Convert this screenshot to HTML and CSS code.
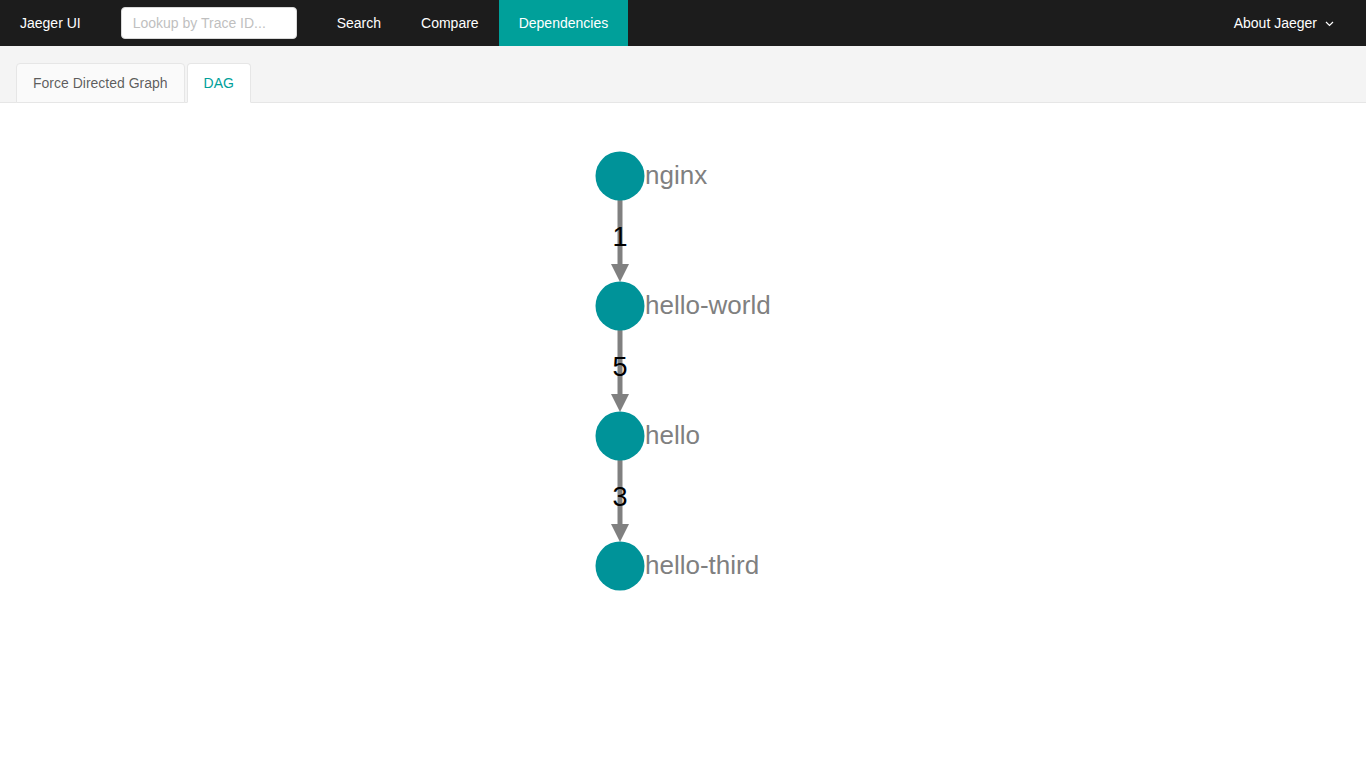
FILE: index.html
```html
<!DOCTYPE html>
<html lang="en">
<head>
<meta charset="utf-8">
<title>Jaeger UI</title>
<link rel="stylesheet" href="styles.css">
</head>
<body>
<header class="topnav">
  <a class="brand">Jaeger UI</a>
  <input class="lookup" type="text" placeholder="Lookup by Trace ID...">
  <nav class="menu">
    <a class="menu-item">Search</a>
    <a class="menu-item">Compare</a>
    <a class="menu-item active">Dependencies</a>
  </nav>
  <div class="about">About Jaeger
    <svg class="caret" width="9" height="6" viewBox="0 0 9 6"><path d="M1 1 L4.5 4.5 L8 1" fill="none" stroke="#fff" stroke-width="1.2"/></svg>
  </div>
</header>
<div class="tabbar">
  <div class="tab">Force Directed Graph</div>
  <div class="tab tab-active">DAG</div>
</div>
<main class="canvas">
  <svg class="dag" width="1366" height="665" viewBox="0 103 1366 665">
    <g class="edges">
      <line x1="620" y1="200" x2="620" y2="266" />
      <polygon points="611,264 629,264 620,282" />
      <text x="620" y="246">1</text>
      <line x1="620" y1="330" x2="620" y2="396" />
      <polygon points="611,394 629,394 620,412" />
      <text x="620" y="376">5</text>
      <line x1="620" y1="460" x2="620" y2="526" />
      <polygon points="611,524 629,524 620,542" />
      <text x="620" y="506">3</text>
    </g>
    <g class="nodes">
      <circle cx="620" cy="176" r="24.5"/>
      <text x="645" y="184">nginx</text>
      <circle cx="620" cy="306" r="24.5"/>
      <text x="645" y="314">hello-world</text>
      <circle cx="620" cy="436" r="24.5"/>
      <text x="645" y="444">hello</text>
      <circle cx="620" cy="566" r="24.5"/>
      <text x="645" y="574">hello-third</text>
    </g>
  </svg>
</main>
</body>
</html>
```
FILE: styles.css
```css
* { box-sizing: border-box; }
html, body { margin: 0; padding: 0; background: #fff; }
body {
  font-family: "Liberation Sans", Arial, sans-serif;
  font-size: 14px;
  color: rgba(0,0,0,0.65);
  width: 1366px;
  height: 768px;
  overflow: hidden;
}
.topnav {
  height: 46px;
  background: #1c1c1c;
  display: flex;
  align-items: center;
  color: #fff;
}
.brand {
  color: #fff;
  padding: 0 20px;
  font-size: 14px;
}
.lookup {
  margin-left: 20px;
  width: 176px;
  height: 32px;
  border: 1px solid #d9d9d9;
  border-radius: 4px;
  padding: 4px 11px;
  font-family: inherit;
  font-size: 14px;
  color: #333;
  background: #fff;
  outline: none;
}
.lookup::placeholder { color: #bfbfbf; }
.menu {
  display: flex;
  height: 46px;
  margin-left: 20px;
}
.menu-item {
  display: flex;
  align-items: center;
  padding: 0 20px;
  color: #fff;
  height: 46px;
}
.menu-item.active { background: #00a09a; }
.about {
  margin-left: auto;
  margin-right: 32px;
  display: flex;
  align-items: center;
  gap: 8px;
  color: #fff;
}
.caret { margin-top: 1px; }
.tabbar {
  height: 57px;
  background: #f4f4f4;
  border-bottom: 1px solid #e6e6e6;
  display: flex;
  align-items: flex-end;
  padding-left: 16px;
  gap: 2px;
}
.tab {
  height: 40px;
  margin-bottom: -1px;
  padding: 0 16px;
  display: flex;
  align-items: center;
  border: 1px solid #e6e6e6;
  border-radius: 4px 4px 0 0;
  background: #fafafa;
  color: rgba(0,0,0,0.65);
  font-size: 14px;
}
.tab-active {
  background: #fff;
  color: #00a09a;
  border-bottom-color: #fff;
}
.canvas { height: 665px; }
.dag { display: block; }
.edges line { stroke: #808080; stroke-width: 5; }
.edges polygon { fill: #808080; }
.edges text {
  font-family: "Liberation Sans", Arial, sans-serif;
  font-size: 27px;
  fill: #000;
  text-anchor: middle;
}
.nodes circle { fill: #009399; }
.nodes text {
  font-family: "Liberation Sans", Arial, sans-serif;
  font-size: 26px;
  fill: #808080;
}
```
